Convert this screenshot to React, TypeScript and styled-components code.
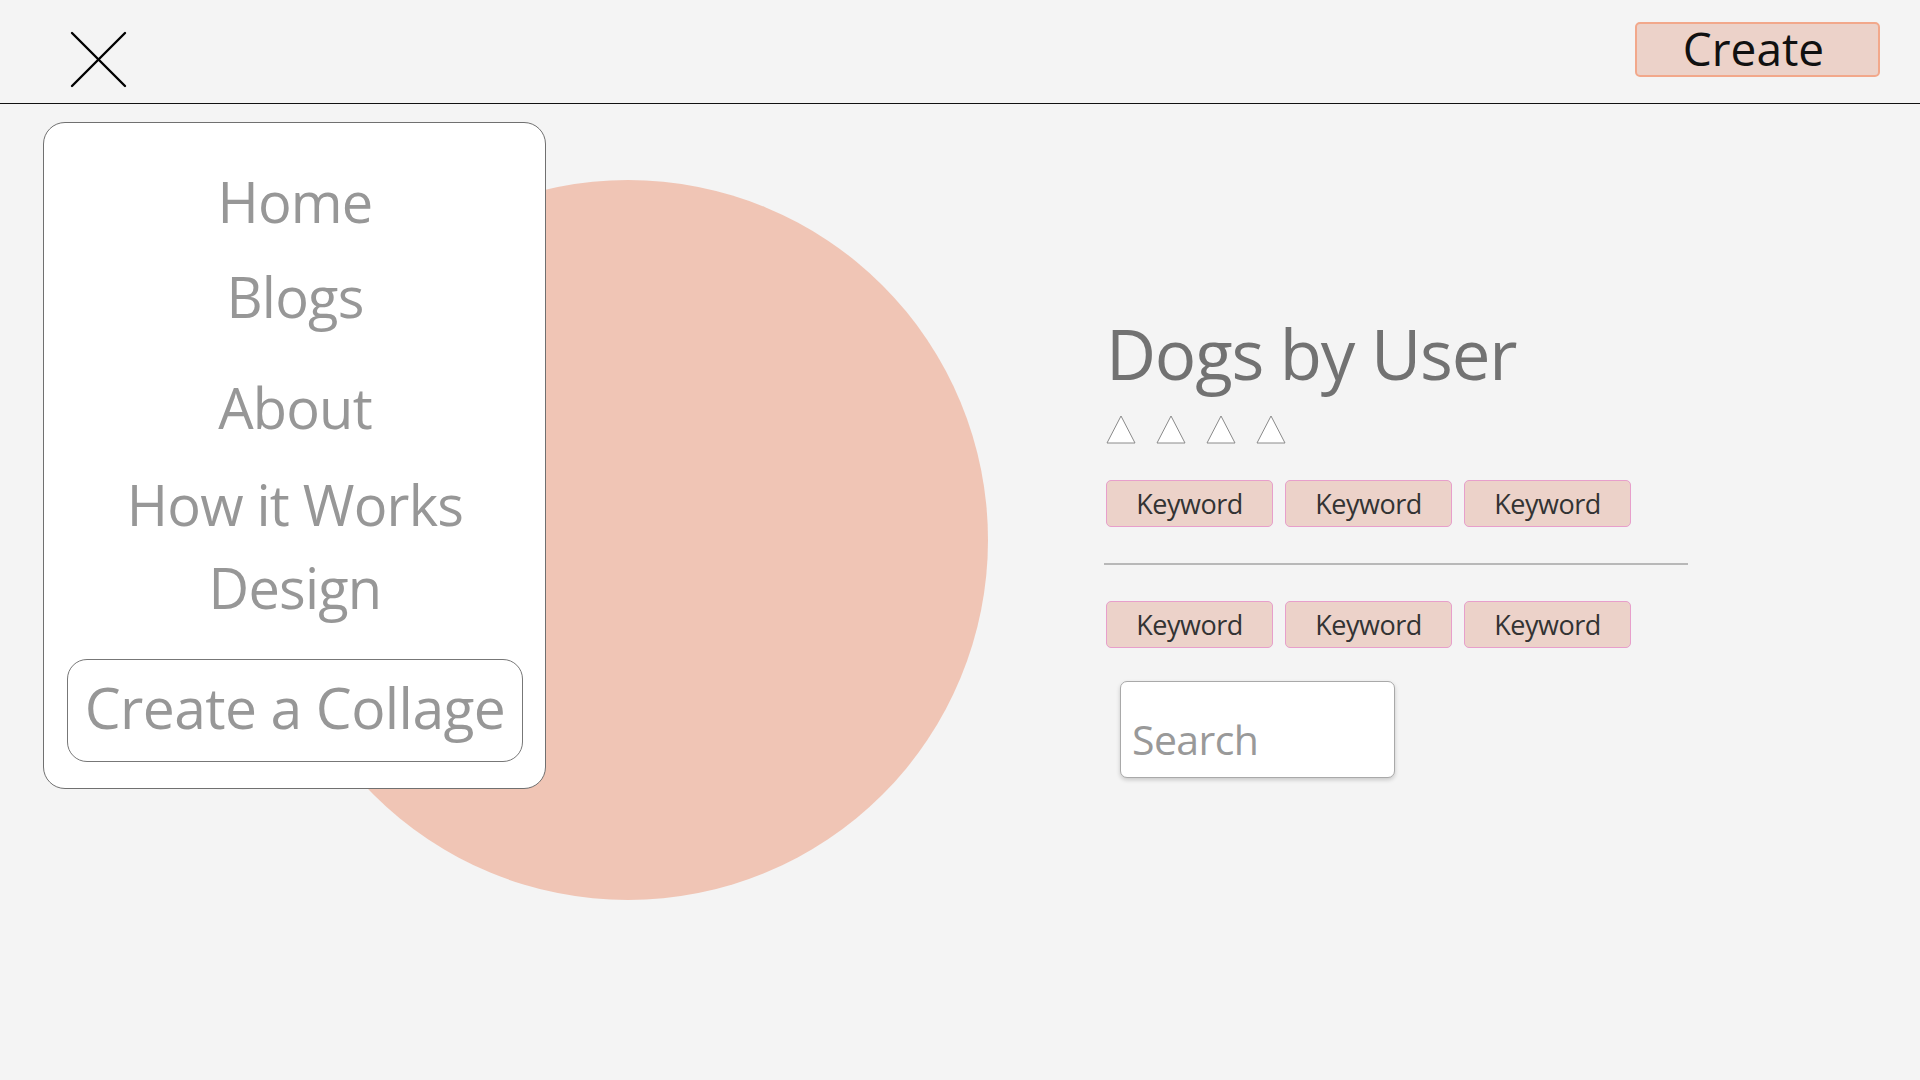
import React from "react";
import styled, { createGlobalStyle } from "styled-components";

const GlobalStyle = createGlobalStyle`
  html, body {
    margin: 0;
    padding: 0;
    background: #f4f4f4;
  }
  * { box-sizing: border-box; }
  body {
    font-family: "Open Sans", "Noto Sans", sans-serif;
  }
`;

const Page = styled.div`
  position: relative;
  width: 1920px;
  height: 1080px;
  background: #f4f4f4;
  overflow: hidden;
`;

const Header = styled.header`
  height: 104px;
  border-bottom: 1px solid #111;
  display: flex;
  justify-content: space-between;
  align-items: flex-start;
  padding: 0 40px 0 70px;
`;

const CloseButton = styled.button`
  margin-top: 31px;
  width: 57px;
  height: 57px;
  padding: 0;
  border: none;
  background: transparent;
  display: flex;
  cursor: pointer;
`;

const CreateButton = styled.button`
  margin-top: 22px;
  width: 245px;
  height: 55px;
  border: 2px solid #f2a88b;
  border-radius: 5px;
  background: #ecd2c9;
  color: #111;
  font-family: "Open Sans", "Noto Sans", sans-serif;
  font-size: 46px;
  line-height: 1;
  display: flex;
  align-items: center;
  justify-content: center;
  padding: 0 8px 4px 0;
`;

const Main = styled.main`
  display: flex;
  align-items: flex-start;
  padding-left: 268px;
  gap: 118px;
`;

const Circle = styled.div`
  margin-top: 76px;
  width: 720px;
  height: 720px;
  border-radius: 50%;
  background: #f0c5b5;
  flex-shrink: 0;
`;

const Details = styled.section`
  margin-top: 214px;
  display: flex;
  flex-direction: column;
  align-items: flex-start;
  width: 584px;
`;

const Title = styled.h1`
  margin: 0;
  font-family: "Open Sans", "Noto Sans", sans-serif;
  font-weight: 400;
  font-size: 69px;
  line-height: 70px;
  color: #727272;
  letter-spacing: -1.2px;
  white-space: nowrap;
`;

const Rating = styled.div`
  margin-top: 27px;
  display: flex;
  gap: 20px;
  height: 29px;
`;

const KeywordRow = styled.div<{ $top: number }>`
  margin-top: ${(p) => p.$top}px;
  display: flex;
  gap: 12px;
`;

const Keyword = styled.span`
  width: 167px;
  height: 47px;
  border: 1px solid #e79fcb;
  border-radius: 5px;
  background: #ecd2c9;
  color: #333;
  font-family: "Open Sans", "Noto Sans", sans-serif;
  font-size: 27px;
  line-height: 1;
  letter-spacing: -0.5px;
  display: flex;
  align-items: center;
  justify-content: center;
  padding-bottom: 1px;
`;

const Divider = styled.hr`
  margin: 36px 0 0 -2px;
  width: 584px;
  height: 2px;
  border: none;
  background: #b8b8b8;
`;

const SearchBox = styled.div`
  margin: 33px 0 0 14px;
  width: 275px;
  height: 97px;
  border: 1px solid #a9a9a9;
  border-radius: 7px;
  background: #fff;
  box-shadow: 0 2px 4px rgba(0, 0, 0, 0.18);
  display: flex;
  align-items: flex-start;
  padding: 35px 0 0 11px;
`;

const SearchInput = styled.input`
  width: 100%;
  border: none;
  outline: none;
  background: transparent;
  padding: 0;
  font-family: "Open Sans", "Noto Sans", sans-serif;
  font-size: 41px;
  line-height: 44px;
  height: 44px;
  color: #999;
  letter-spacing: -0.6px;
  &::placeholder {
    color: #999;
  }
`;

const Drawer = styled.nav`
  position: absolute;
  left: 43px;
  top: 122px;
  width: 503px;
  height: 667px;
  background: #fff;
  border: 1px solid #707070;
  border-radius: 22px;
  display: flex;
  flex-direction: column;
  align-items: center;
  padding: 0 22px 0 23px;
`;

const NavItem = styled.a<{ $top: number }>`
  margin-top: ${(p) => p.$top}px;
  font-family: "Open Sans", "Noto Sans", sans-serif;
  font-size: 56px;
  line-height: 58px;
  height: 58px;
  color: #979797;
  letter-spacing: -0.8px;
  text-decoration: none;
  white-space: nowrap;
`;

const CollageButton = styled.button`
  margin-top: 43px;
  width: 456px;
  height: 103px;
  border: 1px solid #777;
  border-radius: 20px;
  background: #fff;
  color: #979797;
  font-family: "Open Sans", "Noto Sans", sans-serif;
  font-size: 57px;
  line-height: 58px;
  letter-spacing: -0.6px;
  white-space: nowrap;
  display: flex;
  align-items: center;
  justify-content: center;
  padding: 0 0 8px 0;
`;

const Triangle = () => (
  <svg width="30" height="29" viewBox="0 0 30 29">
    <polygon points="15,1 29,28 1,28" fill="#fff" stroke="#8a8a8a" strokeWidth="1" />
  </svg>
);

const CloseIcon = () => (
  <svg width="57" height="57" viewBox="0 0 57 57">
    <line x1="2" y1="2" x2="55" y2="55" stroke="#000" strokeWidth="2.4" strokeLinecap="round" />
    <line x1="55" y1="2" x2="2" y2="55" stroke="#000" strokeWidth="2.4" strokeLinecap="round" />
  </svg>
);

const navItems: { label: string; top: number }[] = [
  { label: "Home", top: 49 },
  { label: "Blogs", top: 37 },
  { label: "About", top: 53 },
  { label: "How it Works", top: 39 },
  { label: "Design", top: 25 },
];

export default function App() {
  return (
    <>
      <GlobalStyle />
      <Page>
        <Header>
          <CloseButton aria-label="Close menu">
            <CloseIcon />
          </CloseButton>
          <CreateButton>Create</CreateButton>
        </Header>
        <Main>
          <Circle />
          <Details>
            <Title>Dogs by User</Title>
            <Rating>
              <Triangle />
              <Triangle />
              <Triangle />
              <Triangle />
            </Rating>
            <KeywordRow $top={36}>
              <Keyword>Keyword</Keyword>
              <Keyword>Keyword</Keyword>
              <Keyword>Keyword</Keyword>
            </KeywordRow>
            <Divider />
            <KeywordRow $top={36}>
              <Keyword>Keyword</Keyword>
              <Keyword>Keyword</Keyword>
              <Keyword>Keyword</Keyword>
            </KeywordRow>
            <SearchBox>
              <SearchInput placeholder="Search" />
            </SearchBox>
          </Details>
        </Main>
        <Drawer>
          {navItems.map((item) => (
            <NavItem key={item.label} href="#" $top={item.top}>
              {item.label}
            </NavItem>
          ))}
          <CollageButton>Create a Collage</CollageButton>
        </Drawer>
      </Page>
    </>
  );
}
